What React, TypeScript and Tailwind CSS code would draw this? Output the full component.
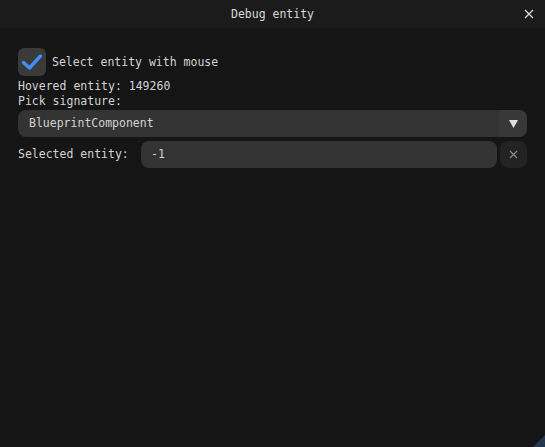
export default function App() {
  return (
    <div
      className="w-[545px] h-[447px] bg-[#151515] text-[#d4d4d4] text-[11.5px] leading-[15px] flex flex-col overflow-hidden relative"
      style={{ fontFamily: '"DejaVu Sans Mono", "Liberation Mono", monospace' }}
    >
      {/* title bar */}
      <div className="h-[28px] shrink-0 bg-[#1b1b1b] flex items-center justify-center relative">
        <span className="text-[#d8d8d8]">Debug entity</span>
        <button className="absolute right-[10px] top-[8px] w-[12px] h-[12px] flex items-center justify-center">
          <svg width="10" height="10" viewBox="0 0 10 10">
            <path d="M1 1 L9 9 M9 1 L1 9" stroke="#d8d8d8" strokeWidth="1.3" />
          </svg>
        </button>
      </div>

      <div className="flex flex-col px-[18px] pt-[20px]">
        {/* checkbox */}
        <label className="flex items-center gap-[6px] h-[28px]">
          <span className="w-[28px] h-[28px] rounded-[6px] bg-[#3a3a3a] flex items-center justify-center">
            <svg width="22" height="18" viewBox="0 0 22 18">
              <path d="M2.5 9.5 L8.5 15 L19.5 3" fill="none" stroke="#3f8ff5" strokeWidth="3.4" strokeLinecap="round" strokeLinejoin="round" />
            </svg>
          </span>
          <span>Select entity with mouse</span>
        </label>

        <div className="mt-[3px]">Hovered entity: 149260</div>
        <div>Pick signature:</div>

        {/* combo */}
        <div className="mt-[1px] h-[27px] rounded-[8px] bg-[#333333] flex overflow-hidden">
          <div className="flex-1 flex items-center pl-[11px]">BlueprintComponent</div>
          <div className="w-[28px] bg-[#383838] flex items-center justify-center">
            <svg width="9" height="8" viewBox="0 0 9 8">
              <path d="M0 0 H9 L4.5 8 Z" fill="#e0e0e0" />
            </svg>
          </div>
        </div>

        {/* selected entity */}
        <div className="mt-[4px] flex items-center h-[27px]">
          <span className="w-[123px] shrink-0">Selected entity:</span>
          <div className="flex-1 h-[27px] rounded-[8px] bg-[#333333] flex items-center pl-[10px]">-1</div>
          <div className="ml-[3px] w-[27px] h-[27px] rounded-[8px] bg-[#232323] flex items-center justify-center">
            <svg width="9" height="9" viewBox="0 0 9 9">
              <path d="M1 1 L8 8 M8 1 L1 8" stroke="#8a8a8a" strokeWidth="1.2" />
            </svg>
          </div>
        </div>
      </div>

      {/* resize grip */}
      <svg className="absolute right-0 bottom-0" width="12" height="12" viewBox="0 0 12 12">
        <path d="M12 0 V12 H0 Z" fill="#25374f" />
      </svg>
    </div>
  );
}
